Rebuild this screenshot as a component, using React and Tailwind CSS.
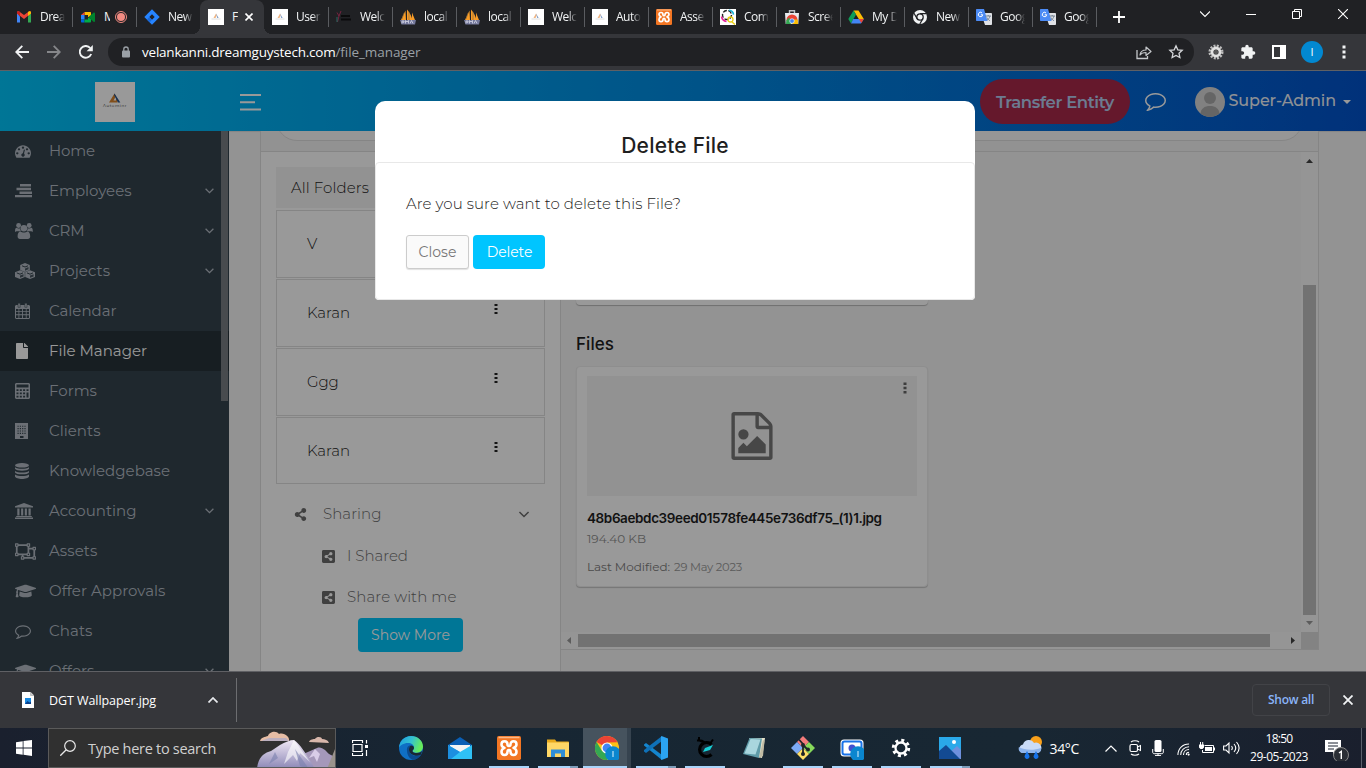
import React, { useLayoutEffect, useRef } from "react";
import {
  FaFile, FaRegObjectUngroup, FaGraduationCap, FaShareAlt, FaShareAltSquare,
} from "react-icons/fa";
import { MdExtension } from "react-icons/md";

/* Text tracked out or in so that it fills the given width. */
function Fit({ w, className = "", children }) {
  const ref = useRef(null);
  useLayoutEffect(() => {
    const el = ref.current;
    el.style.letterSpacing = "0px";
    const natural = el.getBoundingClientRect().width;
    el.style.letterSpacing = `${(w - natural) / Math.max(1, children.length)}px`;
  }, [w, children]);
  return (
    <span ref={ref} className={`inline-block whitespace-pre ${className}`}>{children}</span>
  );
}

const Svg = ({ vb = "0 0 16 16", className = "", children, ...rest }) => (
  <svg viewBox={vb} className={`block shrink-0 ${className}`} fill="none" {...rest}>{children}</svg>
);

/* ---------- favicons ---------- */
const Gmail = () => (
  <Svg className="h-4 w-4">
    <path d="M1 4v9.5h3V7.6z" fill="#4285f4" /><path d="M15 4v9.500h-3V7.600z" fill="#34a853" />
    <path d="M1 4.500 8 10l7-5.500V3.500C15 2 13.400 2 12.500 2.700L8 6 3.500 2.700C2.600 2 1 2 1 3.500z" fill="#ea4335" />
    <path d="M12 7l3-2.400V3.500c0-1.400-1.600-1.500-2.500-.800L12 3z" fill="#fbbc04" />
    <path d="M1 4.600 4 7V3l-.5-.3C2.600 2 1 2.100 1 3.500z" fill="#c5221f" />
  </Svg>
);
const Meet = () => (
  <Svg className="h-4 w-4">
    <path d="M4.500 3H10c.7 0 1 .4 1 1v2.500L8.600 8H8V6H4.500z" fill="#fbbc04" />
    <path d="M4.500 3v3H1z" fill="#ea4335" /><path d="M1 6h3.500v4.500H1z" fill="#2684fc" />
    <path d="M1 10.500h3.500v3H2c-.6 0-1-.4-1-1z" fill="#0066da" />
    <path d="M4.500 10.500H8V8.500l3 1.500v2.500c0 .6-.4 1-1 1H4.500z" fill="#00ac47" />
    <path d="m8.500 8 5-4.300c.500-.400 1.500-.300 1.500.500v8c0 .800-1 .900-1.500.500z" fill="#00832d" />
  </Svg>
);
const Jira = () => (
  <Svg className="h-4 w-4"><path d="M8 .3 15.700 8 8 15.700.3 8z" fill="#2684ff" /><path d="M8 5.300 10.700 8 8 10.700 5.300 8z" fill="#202124" /><path d="M5.300 8 8 10.700 5.700 13.300 3 10.600z" fill="#1868db" /></Svg>
);
const AutoFav = () => (
  <Svg className="h-4 w-4"><path d="M0 0h16v16H0z" fill="#fff" /><path d="M5.500 9 8 4.500l.8 1.500L7.500 9z" fill="#f0b582" /><path d="m8 4.500 2.700 4.500H9.200z" fill="#7d9cc9" /><path d="M3.500 10h9" stroke="#d5d5d5" strokeWidth=".8" /></Svg>
);
const Dark = () => (
  <Svg className="h-4 w-4"><path d="M1 3.500 3 7l2-5M3 7 1.500 13" stroke="#8b2346" strokeWidth="1" opacity=".8" /><path d="M1 8v5" stroke="#276b62" /><path d="M5 6h9v2H5zM5 9.500h10v2H5z" fill="#0b0b0c" /></Svg>
);
const Pma = () => (
  <Svg className="h-4 w-4">
    <path d="M5.500 1.500 1 11h5zM7 .5V11h5.500C11.500 7 9.500 3 7 .5zM12 3.500V11h3z" fill="#f89c27" />
    <path d="M4 4 2 10M9 3v8" stroke="#8c6b3b" strokeWidth=".7" />
    <path d="M0 11h16l-1 4.500H1.500z" fill="#74789b" /><path d="M2 14.500v-2.500h2v1.300H2.500m3 1.200v-3l1.500 1.500L8.500 11.500v3M10 14.500l1.500-3 1.500 3" stroke="#d9dbe8" strokeWidth=".8" />
  </Svg>
);
const Xampp = ({ className = "h-4 w-4" }) => (
  <Svg className={className}>
    <rect width="16" height="16" rx="1.200" fill="#f37623" /><path d="M1 .5h14v1H1z" fill="#f9b98a" />
    <path d="M5 7.900C3.500 7.300 3 6.600 3 5.600 3 4.300 3.900 3.500 5 3.500s2 .8 2 2.200c0 .7.300 1 1 1s1-.3 1-1c0-1.400.9-2.200 2-2.200s2 .8 2 2.100c0 1-.5 1.700-2 2.300 1.500.6 2 1.500 2 2.600 0 1.300-.9 2.100-2 2.100s-2-.8-2-2.100c0-.8-.3-1.100-1-1.100s-1 .3-1 1.100c0 1.300-.9 2.100-2 2.100s-2-.8-2-2.100c0-1.100.5-2 2-2.600z" stroke="#fff" strokeWidth="1.700" strokeLinejoin="round" />
  </Svg>
);
const Com = () => (
  <Svg className="h-4 w-4"><path d="M0 0h16v16H0z" fill="#fff" /><circle cx="7" cy="6" r="4.500" stroke="#222" strokeWidth="1.400" strokeDasharray="4 1.500" /><path d="M9 1.200a5 5 0 0 1 4.500 4.500" stroke="#19b5d8" strokeWidth="1.600" /><path d="M1.500 7.500c.5 3 2.500 4.600 5 5" stroke="#e6259a" strokeWidth="1.600" /><circle cx="10.500" cy="10.500" r="2.500" stroke="#e9cf16" strokeWidth="1.300" /><path d="m12 13 3 2.500" stroke="#e9cf16" strokeWidth="1.500" /></Svg>
);
const Store = () => (
  <Svg className="h-4 w-4"><path d="M1 4h14l-.7 11H1.700z" fill="#e8eaed" /><path d="M5.500 4V1.800h5V4" stroke="#bdc1c6" strokeWidth="1.400" /><path d="M2.500 11a5.500 5.500 0 0 1 11 0v1h-11z" fill="#ea4335" /><path d="M2.300 11.500 5 8.500l3 5-1.500 1.500H2z" fill="#34a853" /><path d="m13.700 10.500-5 0L8 15h6z" fill="#fbbc04" /><circle cx="8" cy="12" r="2.300" fill="#4285f4" stroke="#fff" strokeWidth=".6" /></Svg>
);
const Drive = () => (
  <Svg className="h-4 w-4"><path d="M5.500 1.500h5L15.800 10h-5z" fill="#fbbc04" /><path d="M5.500 1.500 8 5.500 3 14.500.3 10z" fill="#0f9d58" /><path d="M5.200 10h10.600L13 14.500H3z" fill="#4285f4" /><path d="M10.800 10h5l-2.500 4z" fill="#ea4335" /></Svg>
);
const ChromeMono = () => (
  <Svg className="h-4 w-4"><circle cx="8" cy="8" r="7" fill="#f1f3f4" /><circle cx="8" cy="8" r="3.200" fill="#f1f3f4" stroke="#202124" strokeWidth="1.300" /><path d="M8 4.700h6.500M5.100 9.600 2 4.300M10.900 9.600 7.800 15" stroke="#202124" strokeWidth="1.200" /></Svg>
);
const Translate = () => (
  <Svg className="h-4 w-4"><path d="M5 4h10.200c.5 0 .8.300.8.800V15c0 .6-.3 1-.8 1H9z" fill="#e0e2e6" /><path d="M1 0h7l3.500 12H1c-.6 0-1-.4-1-1V1c0-.6.400-1 1-1z" fill="#4c8bf5" /><path d="M6.800 5.800H4.800M6.700 5.800A2.200 2.200 0 1 1 6 3.900" stroke="#fff" strokeWidth="1" /><path d="M9.500 7h5.500M12.200 6v1M14 7c-.5 2.200-2 3.500-3 4.200M11 8.500c.6 1.500 2 2.700 3 3.300" stroke="#6b7a8c" strokeWidth=".9" /></Svg>
);

const TABS = [
  [Gmail, "Drea"], [Meet, "M", "rec"], [Jira, "New"], [AutoFav, "F", "active"], [AutoFav, "User"],
  [Dark, "Welc"], [Pma, "local"], [Pma, "local"], [AutoFav, "Welc"], [AutoFav, "Auto"],
  [Xampp, "Asse"], [Com, "Com"], [Store, "Scree"], [Drive, "My D"], [ChromeMono, "New"],
  [Translate, "Goog"], [Translate, "Goog"],
];

function Tab({ Icon, label, kind }) {
  const active = kind === "active";
  return (
    <div className={`relative flex h-[34px] w-16 shrink-0 items-center pl-2 ${active ? "rounded-t-lg bg-[#35363a]" : ""}`}>
      {active && <>
        <div className="absolute -left-2 bottom-0 h-2 w-2 bg-[radial-gradient(circle_at_0_0,transparent_8px,#35363a_8px)]" />
        <div className="absolute -right-2 bottom-0 h-2 w-2 bg-[radial-gradient(circle_at_100%_0,transparent_8px,#35363a_8px)]" />
      </>}
      <Icon />
      <div className={`ml-2 overflow-hidden whitespace-nowrap text-[12px] tracking-[-0.5px] text-[#f1f3f4] ${kind ? "w-[6px]" : "w-[25px] [mask-image:linear-gradient(to_right,black_65%,transparent)]"}`}>{label}</div>
      {kind === "rec" && <Svg className="ml-[5px] h-3 w-3" vb="0 0 12 12"><circle cx="6" cy="6" r="5.500" stroke="#f28b82" /><circle cx="6" cy="6" r="4" fill="#f28b82" /></Svg>}
      {active && <Svg className="ml-[7px] h-2 w-2" vb="0 0 8 8"><path d="m.5.5 7 7m0-7-7 7" stroke="#fff" strokeWidth="1.600" /></Svg>}
    </div>
  );
}

function TabStrip() {
  return (
    <div className="flex h-[34px] items-center bg-[#202124] pl-2">
      {TABS.map(([Icon, label, kind], i) => (
        <div key={i} className="relative">
          <Tab Icon={Icon} label={label} kind={kind} />
          {i !== 2 && i !== 3 && <div className="absolute -right-px top-[7px] h-5 w-px bg-[#5a5c60]" />}
        </div>
      ))}
      <Svg className="ml-[17px] h-3 w-3" vb="0 0 12 12"><path d="M6 0v12M0 6h12" stroke="#fff" strokeWidth="1.800" /></Svg>
      <div className="ml-auto mb-1.5 flex items-center gap-9 pr-[18px]">
        <Svg className="h-[10px] w-[10px]" vb="0 0 10 10"><path d="m0 2.500 5 5 5-5" stroke="#fff" strokeWidth="1.100" /></Svg>
        <Svg className="h-[10px] w-[10px]" vb="0 0 10 10"><path d="M0 5.500h10" stroke="#fff" /></Svg>
        <Svg className="h-[10px] w-[10px]" vb="0 0 10 10"><path d="M.5 2.500h7v7h-7zM2.500 2.500v-2h7v7h-2" stroke="#fff" /></Svg>
        <Svg className="h-[10px] w-[10px]" vb="0 0 10 10"><path d="m0 0 10 10M10 0 0 10" stroke="#fff" strokeWidth="1.100" /></Svg>
      </div>
    </div>
  );
}

function Toolbar() {
  return (
    <div className="flex h-[37px] items-center border-b border-[#5f6064] bg-[#35363a] pl-[15px] pr-5">
      <Svg className="h-[14px] w-[14px]" vb="0 0 14 14"><path d="M14 7H1.500M7.300.8 1.200 7l6.100 6.200" stroke="#f1f3f4" strokeWidth="1.800" /></Svg>
      <Svg className="ml-[18px] h-[14px] w-[14px]" vb="0 0 14 14"><path d="M0 7h12.500M6.700.8 12.800 7l-6.100 6.200" stroke="#86878a" strokeWidth="1.800" /></Svg>
      <Svg className="ml-[18px] h-[14px] w-[14px]" vb="0 0 14 14"><path d="M12.200 9A5.900 5.900 0 1 1 11.200 3" stroke="#f1f3f4" strokeWidth="1.900" /><path d="M13.800 0v6.200H7.600z" fill="#f1f3f4" /></Svg>
      <div className="ml-[15px] flex h-7 w-[1086px] items-center rounded-full bg-[#202124] pl-[14px] pr-[10px] text-[13.500px]">
        <Svg className="h-3 w-2" vb="0 0 8 12"><rect y="4.500" width="8" height="7" rx="1" fill="#9aa0a6" /><path d="M1.800 5V3.200a2.200 2.200 0 0 1 4.400 0V5" stroke="#9aa0a6" strokeWidth="1.300" /></Svg>
        <div className="ml-3 flex"><Fit w={193.500} className="text-white">velankanni.dreamguystech.com</Fit><Fit w={85} className="text-[#9aa0a6]">/file_manager</Fit></div>
        <Svg className="ml-auto h-4 w-4"><path d="M1 6v8.500h10.500V12" stroke="#c4c7ca" strokeWidth="1.300" /><path d="M4 11c.5-3.500 3-5 6-5V3l5 4.500-5 4v-3c-2.500 0-4.500.5-6 2.500z" stroke="#c4c7ca" strokeWidth="1.200" strokeLinejoin="round" /></Svg>
        <Svg className="ml-4 h-4 w-4"><path d="m8 1.800 1.800 4 4.400.5-3.200 3 .9 4.300L8 11.400l-3.900 2.200.9-4.300-3.200-3 4.400-.5z" stroke="#d4d6d9" strokeWidth="1.300" /></Svg>
      </div>
      <Svg className="ml-[14px] h-4 w-4"><circle cx="8" cy="8" r="6.300" stroke="#bdbdbd" strokeWidth="2.400" strokeDasharray="2 1.300" /><circle cx="8" cy="8" r="4" stroke="#e1e1e1" strokeWidth="2.800" /><circle cx="8" cy="8" r="2.200" fill="#5a5a5a" /></Svg>
      <MdExtension className="ml-4 h-4 w-4 text-[#f1f3f4]" />
      <Svg className="ml-4 h-[14px] w-[14px]" vb="0 0 14 14"><path d="M0 0h14v14H0zM2 2v10h6V2z" fill="#fff" fillRule="evenodd" /></Svg>
      <div className="ml-[15px] flex h-[22px] w-[22px] items-center justify-center rounded-full bg-[#0288d1] text-[11px] text-white">I</div>
      <Svg className="ml-auto h-[14px] w-1" vb="0 0 4 14"><path d="M.5.500h3v3h-3zM.5 5.500h3v3h-3zM.5 10.500h3v3h-3z" fill="#f1f3f4" /></Svg>
    </div>
  );
}

/* ---------- application icons ---------- */
const Gauge = ({ className }) => (
  <Svg vb="0 0 1792 1792" className={className}><path fill="currentColor" d="M384 1152q0-53-37.500-90.500t-90.500-37.500-90.500 37.500-37.500 90.500 37.500 90.500 90.500 37.500 90.500-37.500 37.500-90.500zm192-448q0-53-37.500-90.500t-90.500-37.500-90.500 37.500-37.500 90.500 37.500 90.500 90.500 37.500 90.500-37.500 37.500-90.500zm428 481l101-382q6-26-7.500-48.500t-38.500-29.500-48 6.500-30 39.500l-101 382q-60 5-107 43.500t-63 98.500q-20 77 20 146t117 89 146-20 89-117q16-60-6-117t-72-91zm660-33q0-53-37.500-90.500t-90.500-37.500-90.500 37.500-37.500 90.500 37.500 90.500 90.500 37.500 90.500-37.500 37.500-90.500zm-640-640q0-53-37.500-90.500t-90.500-37.500-90.500 37.500-37.500 90.500 37.500 90.500 90.500 37.500 90.500-37.500 37.500-90.500zm448 192q0-53-37.500-90.500t-90.500-37.500-90.500 37.500-37.500 90.500 37.500 90.500 90.500 37.500 90.500-37.500 37.500-90.500zm320 448q0 261-141 483-19 29-54 29h-1402q-35 0-54-29-141-221-141-483 0-182 71-348t191-286 286-191 348-71 348 71 286 191 191 286 71 348z" /></Svg>
);
const Comment = ({ className }) => (
  <Svg vb="0 0 1792 1792" className={className}><path fill="currentColor" d="M896 384q-204 0-381.500 69.500t-282 187.500-104.500 255q0 112 71.500 213.500t201.500 175.500l87 50-27 96q-24 91-70 172 152-63 275-171l43-38 57 6q69 8 130 8 204 0 381.500-69.500t282-187.500 104.500-255-104.500-255-282-187.500-381.500-69.500zM1792 896q0 174-120 321.500t-326 233-450 85.500q-70 0-145-8-198 175-460 242-49 14-114 22h-5q-15 0-27-10.500t-16-27.500v-1q-3-4-.5-12t2-10 4.500-9.500l6-9 7-8.500 8-9q7-8 31-34.500t34.500-38 31-39.500 32.500-51 27-59 26-76q-157-89-247.500-220t-90.500-281q0-174 120-321.500t326-233 450-85.500 450 85.500 326 233 120 321.500z" /></Svg>
);
const FileImage = ({ className }) => (
  <Svg vb="128 0 1536 1792" className={className}><path fill="currentColor" d="M1596 380q28 28 48 76t20 88v1152q0 40-28 68t-68 28h-1344q-40 0-68-28t-28-68v-1600q0-40 28-68t68-28h896q40 0 88 20t76 48zm-444-244v376h376q-10-29-22-41l-313-313q-12-12-41-22zm384 1528v-1024h-416q-40 0-68-28t-28-68v-416h-768v1536h1280zm-128-448v320h-1024v-192l192-192 128 128 384-384zm-832-192q-80 0-136-56t-56-136 56-136 136-56 136 56 56 136-56 136-136 56z" /></Svg>
);
const Bars = ({ className }) => (
  <Svg vb="0 0 17 14" className={className}><path fill="currentColor" d="M5 0h11v2.500H5zM1.500 3.700H16v2.500H1.500zM4.500 7.400H17v2.500H4.500zM0 11h17v2.300H0z" /></Svg>
);
const Users = ({ className }) => (
  <Svg vb="0 0 18 16" className={className}><g fill="currentColor"><circle cx="3.600" cy="2.500" r="2.400" /><circle cx="14.200" cy="2.500" r="2.400" /><path d="M0 8.500C0 6 .5 4.800 1.500 4.800c.7.500 1.300.7 2.100.7.500 0 1-.1 1.600-.3 0 1.300.3 2.200 1 3H1.400C.5 8.900 0 9 0 8.500zM17.800 8.500c0-2.500-.5-3.700-1.500-3.700-.7.500-1.300.7-2.100.7-.5 0-1-.1-1.600-.3 0 1.300-.3 2.200-1 3h4.800c.9.700 1.400.8 1.400.3z" /><circle cx="8.900" cy="5.200" r="3.300" /><path d="M2.600 13.500c0-3 .9-5 3-5 .9.700 1.900 1.100 3.300 1.100s2.400-.4 3.300-1.100c2.100 0 3 2 3 5 0 1.500-1 2.500-2.300 2.500h-8c-1.300 0-2.300-1-2.300-2.500z" /></g></Svg>
);
const Cubes = ({ className }) => (
  <Svg vb="0 0 20 16" className={className}><path fill="currentColor" d="m10 0 4.800 2v5L10 9 5.200 7V2zM5 7.200l4.800 2v4.800L5 16 0 14V9.200zM15 7.200l5 2V14l-5 2-4.800-2V9.200z" /><path d="M7 2.800 10 4l3-1.200M1.800 9.900 5 11.200l3-1.300M12 9.900l3 1.300 3-1.300" stroke="#35444d" strokeWidth="1" /><path d="m10 5.500 3.500-1.400v2.200L10 7.800zM5 12.600l3.500-1.400v2.200L5 14.800zM15 12.600l3.600-1.400v2.200L15 14.800z" fill="#35444d" opacity=".85" /></Svg>
);
const Database = ({ className }) => (
  <Svg vb="0 0 14 16" className={className}><g fill="currentColor"><ellipse cx="7" cy="2.300" rx="7" ry="2.300" /><path d="M0 4.200c3 2 11 2 14 0v1.500C13 8.300 1 8.300 0 5.700zM0 7.900c3 2 11 2 14 0v1.500c-1 2.600-13 2.600-14 0zM0 11.600c3 2 11 2 14 0v1.900c-1 3.300-13 3.300-14 0z" /></g></Svg>
);
const Bank = ({ className }) => (
  <Svg vb="0 0 18 16" className={className}><path fill="currentColor" d="M9 0l9 3.300v1.200H0V3.300zM2.300 5.500h2.200v7H2.300zM6.100 5.500h2.100v7H6.100zM9.800 5.500h2.100v7H9.800zM13.500 5.500h2.200v7h-2.200zM1.200 12.900h15.600V14H1.200zM0 14.600h18V16H0z" /></Svg>
);
const Calendar = ({ className }) => (
  <Svg vb="0 0 15 16" className={className}><path fill="currentColor" fillRule="evenodd" d="M1 2h13l1 1v12l-1 1H1l-1-1V3zM1 6v2.200h2.500V6zm3.300 0v2.200h2.800V6zM8 6v2.200h2.800V6zm3.600 0v2.200H14V6zM1 9v2.300h2.500V9zm3.300 0v2.300h2.800V9zM8 9v2.300h2.800V9zm3.600 0v2.300H14V9zM1 12.200V15h2.500v-2.800zm3.300 0V15h2.800v-2.800zm3.700 0V15h2.800v-2.800zm3.600 0V15H14v-2.800z" /><path fill="currentColor" stroke="#35444d" strokeWidth=".5" d="M3 .3h2.200v4H3zM9.800.3H12v4H9.800z" /></Svg>
);
const Calc = ({ className }) => (
  <Svg vb="0 0 15 16" className={className}><path fill="currentColor" fillRule="evenodd" d="M1 0h13l1 1v14l-1 1H1l-1-1V1zM1.500 1.500v3h12v-3zM1.500 6.200v1.800h2V6.200zm3.300 0v1.800h2V6.200zm3.300 0v1.800h2V6.200zm3.400 0v1.800h2V6.200zM1.500 9.500v1.800h2V9.500zm3.300 0v1.800h2V9.500zm3.300 0v1.800h2V9.500zM1.500 12.700v1.800h2v-1.800zm3.300 0v1.800h2v-1.800zm3.300 0v1.800h2v-1.800zm3.400-3.200v5h2v-5z" /></Svg>
);
const Building = ({ className }) => (
  <Svg vb="0 0 13 16" className={className}><path fill="currentColor" d="M0 0h13v16H0z" /><path d="M2.500 3.200h8.500M2.500 5.600h8.500M2.500 8h8.500M2.500 10.400h8.500" stroke="#35444d" strokeWidth="1.100" strokeDasharray="1.200 1.100" /><path d="M5 13h3.500v2H5z" fill="#35444d" /></Svg>
);
const AngleDown = ({ className, sw = 1.300 }) => (
  <Svg vb="0 0 9 6" className={className}><path d="m.6.8 3.900 3.900L8.400.8" stroke="currentColor" strokeWidth={sw} /></Svg>
);
const Kebab = ({ className }) => (
  <Svg vb="0 0 4 12" className={className}><path fill="currentColor" d="M.5.500h3v2.600h-3zM.5 4.700h3v2.600h-3zM.5 8.900h3v2.600h-3z" /></Svg>
);
const KebabSmall = ({ className }) => (
  <Svg vb="0 0 4 10" className={className}><path fill="currentColor" d="M.5 0h3v2h-3zM.5 4h3v2h-3zM.5 8h3v2h-3z" /></Svg>
);

const MENU = [
  ["Home", 46, Gauge, "h-4 w-4"], ["Employees", 82.500, Bars, "h-[14px] w-[17px]", 1], ["CRM", 35.500, Users, "h-4 w-[18px]", 1],
  ["Projects", 61, Cubes, "h-4 w-5", 1], ["Calendar", 67.500, Calendar, "h-4 w-[15px]"], ["File Manager", 98, FaFile, "h-4 w-[14px]"],
  ["Forms", 48, Calc, "h-4 w-[15px]"], ["Clients", 51.500, Building, "h-4 w-[13px]"], ["Knowledgebase", 121, Database, "h-4 w-[14px]"],
  ["Accounting", 87.500, Bank, "h-4 w-[18px]", 1], ["Assets", 48.500, FaRegObjectUngroup, "h-[19px] w-[21px]"],
  ["Offer Approvals", 116.500, FaGraduationCap, "h-[18px] w-[21px]"], ["Chats", 43.500, Comment, "h-4 w-4"], ["Offers", 45.500, FaGraduationCap, "h-[18px] w-[21px]", 1],
];

function Sidebar() {
  return (
    <nav className="relative h-[540px] w-[229px] shrink-0 overflow-hidden bg-[#35444d]">
      {MENU.map(([label, w, Icon, size, sub]) => {
        const on = label === "File Manager";
        return (
          <div key={label} className={`flex h-10 items-center pl-[15px] pr-[15px] text-[15px] ${on ? "bg-black/25 text-white" : "text-[#b2bac4]"}`}>
            <div className="flex w-[34px] items-center"><Icon className={size} /></div>
            <Fit w={w}>{label}</Fit>
            {sub && <AngleDown className="ml-auto h-[6px] w-[9px]" />}
          </div>
        );
      })}
      <div className="absolute left-[221px] top-0 h-[270px] w-[7px] bg-[#797d83]" />
    </nav>
  );
}

function Header() {
  return (
    <header className="flex h-[60px] shrink-0 items-center bg-[linear-gradient(to_right,#00c5fb_0%,#0253cc_100%)] pl-[95px] pr-[15px] text-white">
      <div className="mt-[2px] flex h-10 w-10 flex-col items-center justify-center bg-white">
        <Svg className="mt-[-4px] h-[10px] w-3" vb="0 0 12 10"><path d="M0 9.500 5.500.5 7 3 4.500 7.500h2.500V5.500h1.500v4z" fill="#d8832c" /><path d="m5.500.5 5.800 9H9L5 2z" fill="#24548f" /></Svg>
        <span className="text-[4px] leading-[5px] tracking-[0.6px] text-[#333]">Autominr</span>
      </div>
      <Svg className="ml-[105px] mt-[2px] h-[17px] w-[21px]" vb="0 0 21 17"><path d="M0 1h21M0 8.200h15M0 15.500h21" stroke="#fff" strokeWidth="2" /></Svg>
      <div className="ml-auto flex h-[45px] w-[150px] items-center justify-center rounded-full bg-[#a9284a] pl-[1px] pt-[2px] text-[16.500px] font-semibold text-[#b5cdf0]"><Fit w={118}>Transfer Entity</Fit></div>
      <Comment className="mb-[1px] ml-[15px] h-[21px] w-[21px]" />
      <Svg className="ml-[29px] mt-[1px] h-[30px] w-[30px]" vb="0 0 30 30"><circle cx="15" cy="15" r="15" fill="#d7d7d7" /><circle cx="15" cy="11" r="6" fill="#a9a9a9" /><path d="M5.500 26.500C6 21.500 9.500 19 15 19s9 2.500 9.500 7.500A15 15 0 0 1 5.500 26.500z" fill="#a9a9a9" /></Svg>
      <div className="ml-1 text-[16px] font-medium text-[#eef2f8]"><Fit w={107.500}>Super-Admin</Fit></div>
      <Svg className="ml-[7px] mt-[2px] h-1 w-2" vb="0 0 8 4"><path d="M0 0h8L4 4z" fill="#fff" /></Svg>
    </header>
  );
}

function Folder({ name, w, last }) {
  return (
    <div className={`flex items-center border border-[#dedede] pl-[30px] pr-[46px] text-[15px] font-light text-[#222] ${last ? "h-[67px]" : "h-[68px]"}`}>
      <Fit w={w} className="mt-px">{name}</Fit>
      {name !== "V" && <KebabSmall className="mb-2 ml-auto h-[10px] w-1" />}
    </div>
  );
}

function FolderPanel() {
  return (
    <aside className="w-[301px] shrink-0 border-x border-[#dedede] bg-white px-[15px] pt-[15px] text-[15px] font-light text-[#6c6c6c]">
      <div className="flex h-[41px] items-center bg-[#f3f3f3] pl-[15px] pt-[2px] text-[#222]"><Fit w={78}>All Folders</Fit></div>
      <div className="mt-[2px] flex flex-col gap-px">
        <Folder name="V" w={10} /><Folder name="Karan" w={43} /><Folder name="Ggg" w={31.500} /><Folder name="Karan" w={43} last />
      </div>
      <div className="mt-[9px] flex h-[42px] items-center pl-[18px] pr-[15px]">
        <FaShareAlt className="h-[13px] w-[13px]" /><Fit w={58.500} className="ml-4">Sharing</Fit>
        <AngleDown className="ml-auto h-[7px] w-[12px]" />
      </div>
      <div className="mt-px flex h-[41px] items-center pl-[46px]"><FaShareAltSquare className="h-[15px] w-[13px]" /><Fit w={61} className="ml-3">I Shared</Fit></div>
      <div className="flex h-[41px] items-center pl-[46px]"><FaShareAltSquare className="h-[15px] w-[13px]" /><Fit w={109.500} className="ml-3">Share with me</Fit></div>
      <div className="ml-[82px] flex h-[34px] w-[105px] items-center justify-center rounded bg-[#00c5fb] text-[14px] font-normal text-white"><Fit w={79}>Show More</Fit></div>
    </aside>
  );
}

function FileCard() {
  return (
    <div className="h-[221px] w-[352px] rounded border border-[#ededed] bg-white px-[10px] pt-[9px] shadow-[0_1px_1px_0_rgba(0,0,0,0.2)]">
      <div className="relative flex h-[120px] items-center justify-center bg-[#f3f3f3]">
        <FileImage className="h-12 w-[42px] text-[#777]" />
        <Kebab className="absolute right-[10px] top-[6px] h-3 w-1 text-[#666]" />
      </div>
      <div className="mt-[12px] h-5 font-['Inter',sans-serif] text-[13.500px] font-semibold leading-5 text-[#1f1f1f]"><Fit w={294.500}>48b6aebdc39eed01578fe445e736df75_(1)1.jpg</Fit></div>
      <div className="mt-px h-5 text-[12px] leading-5 text-[#8e8e8e]"><Fit w={59}>194.40 KB</Fit></div>
      <div className="mt-2 flex h-5 gap-1 text-[12px] leading-5 text-[#7c7c7c]"><Fit w={83}>Last Modified:</Fit><Fit w={68} className="text-[11.500px] text-[#999]">29 May 2023</Fit></div>
    </div>
  );
}

function FileArea() {
  return (
    <section className="flex h-[498px] flex-1 flex-col border-b border-r border-[#dedede]">
      <div className="flex h-[480px]">
        <div className="flex flex-1 flex-col pl-[15px]">
          <div className="h-[153px] w-[352px] rounded-b bg-white shadow-[0_1px_1px_0_rgba(0,0,0,0.25)]" />
          <div className="mt-[27px] h-[34px] font-['Inter',sans-serif] text-[17px] font-medium leading-6 text-[#1f1f1f]"><Fit w={38}>Files</Fit></div>
          <FileCard />
        </div>
        <div className="flex w-[17px] flex-col items-center bg-[#f8f8f8]">
          <Svg className="mt-[7px] h-1 w-[7px]" vb="0 0 7 4"><path d="M0 4h7L3.500 0z" fill="#444" /></Svg>
          <div className="mt-[122px] h-[330px] w-[13px] bg-[#bebebe]" />
          <Svg className="mt-[6px] h-1 w-[7px]" vb="0 0 7 4"><path d="M0 0h7L3.500 4z" fill="#999" /></Svg>
        </div>
      </div>
      <div className="flex h-[17px] items-center bg-[#f8f8f8] pl-[6px]">
        <Svg className="h-[7px] w-1" vb="0 0 4 7"><path d="M4 0v7L0 3.500z" fill="#999" /></Svg>
        <div className="ml-[7px] h-[13px] w-[692px] bg-[#bebebe]" />
        <Svg className="ml-[21px] h-[7px] w-1" vb="0 0 4 7"><path d="M0 0v7l4-3.500z" fill="#444" /></Svg>
        <div className="ml-auto h-[17px] w-[17px] bg-[#dadada]" />
      </div>
    </section>
  );
}

function Modal() {
  return (
    <div className="absolute left-[375px] top-[30px] h-[199px] w-[600px] overflow-hidden rounded-b rounded-t-[10px] bg-white">
      <div className="flex h-[61px] justify-center pt-[29px] font-['Inter',sans-serif] text-[21px] font-medium leading-8 text-[#1f1f1f]"><Fit w={107.500}>Delete File</Fit></div>
      <div className="h-[138px] rounded border border-[#e8e8e8] pl-[30px] pt-[29px]">
        <div className="text-[15px] font-light leading-6 text-[#222]"><Fit w={275}>Are you sure want to delete this File?</Fit></div>
        <div className="mt-[19px] flex gap-1 text-[14px]">
          <div className="flex h-[34px] w-[63px] items-center justify-center rounded-[3px] border border-[#ccc] bg-[#fafafa] text-[#777] shadow-[0_1px_1px_rgba(0,0,0,0.12)]"><Fit w={38}>Close</Fit></div>
          <div className="flex h-[34px] w-[72px] items-center justify-center rounded bg-[#00c5ff] pl-px text-white"><Fit w={45.500}>Delete</Fit></div>
        </div>
      </div>
    </div>
  );
}

function DownloadBar() {
  return (
    <div className="flex h-[57px] items-center border-t border-[#5f6064] bg-[#35363a] pl-[22px] pr-[13px] text-[12px] text-white">
      <Svg className="mb-px h-4 w-3" vb="0 0 12 16"><path d="M0 0h8.500L12 3.500V16H0z" fill="#fff" /><path d="M8.500 0v3.500H12" fill="#c8c8c8" stroke="#999" strokeWidth=".5" /><path d="M3 6h6v6H3z" fill="#1b8ae0" /><path d="m3 12 2.500-3 2 1.500L9 9.500V12z" fill="#0b3f8a" /></Svg>
      <Fit w={107} className="ml-[15px] mt-[2px] text-[12.500px]">DGT Wallpaper.jpg</Fit>
      <Svg className="ml-[52px] h-[6px] w-[10px]" vb="0 0 10 6"><path d="m.5 5.500 4.500-4.500 4.500 4.500" stroke="#e8eaed" strokeWidth="1.700" /></Svg>
      <div className="ml-[18px] h-[44px] w-px bg-[#6c6d70]" />
      <div className="ml-auto flex h-8 w-[78px] items-center justify-center rounded border border-[#424347] font-semibold text-[#8ab4f8]"><Fit w={46}>Show all</Fit></div>
      <Svg className="ml-[13px] h-[10px] w-[10px]" vb="0 0 10 10"><path d="m.5.500 9 9m0-9-9 9" stroke="#f1f3f4" strokeWidth="1.800" /></Svg>
    </div>
  );
}

/* ---------- taskbar ---------- */
const S = "h-6 w-6";
const Badge = () => (<><circle cx="18" cy="18" r="7.800" fill="#0a86cf" /><path d="M18 15v6" stroke="#b9e2f7" strokeWidth="1.200" /></>);
const EdgeI = () => (
  <Svg vb="0 0 24 24" className={S}>
    <defs><linearGradient id="eg" x1="0" y1="0" x2="1" y2=".3"><stop stopColor="#1b9de2" /><stop offset=".55" stopColor="#35c1d0" /><stop offset="1" stopColor="#66eb5b" /></linearGradient></defs>
    <circle cx="12" cy="12" r="12" fill="#0f6fc5" />
    <path d="M0 11.500C.5 5 5.500 0 12 0c7 0 12 5 12 10.500 0 4-3 6.300-6.500 6.300-3 0-4.300-1-4-2 .3-.7 1.500-1.500 1.500-3.300C15 9 12.500 7 9 7 4.500 7 1 9.500 0 11.500z" fill="url(#eg)" />
    <path d="M8 14.500C7.500 11 10 9 12 9.500c-1.500 1-2 2.300-2 4 0 4 4 7 8.500 6.500 1.500-.2 3-.8 4-1.500-1.500 2.500-4.500 5-8.500 5.300-3.500-.8-6-5-6-9.300z" fill="#0b4a8e" />
    <path d="M10 13.500c0-1.500.5-3 2-4 2 .2 3 1.200 3 2.500 0 1.500-1.500 2-1.500 3 0 1.500 2 2 4 2 2.500 0 4.500-.8 5.500-2-.2 1.300-.5 2.500-1.500 4-4 2-11.500 0-11.500-5.500z" fill="#1a2733" />
  </Svg>
);
const MailI = () => (<Svg vb="0 0 24 24" className={S}><path d="M0 9 12 1l12 8v13H0z" fill="#0a5fb5" /><path d="M2 9h20v8H2z" fill="#f3f3f3" /><path d="M0 9l12 7 12-7v14H0z" fill="#2fc1f5" /><path d="m0 9 12 7-9 7H0z" fill="#1c8fe0" /></Svg>);
const FolderI = () => (<Svg vb="0 0 24 24" className={S}><path d="M1 3.500h8l1.500 2H22c.6 0 1 .4 1 1V21H1z" fill="#e8a91c" /><path d="M1 6.500h22V21H1z" fill="#ffd766" /><path d="M5 21v-7.500h14V21h-4v-3.500H9V21z" fill="#2f8ed8" /></Svg>);
const ChromeI = () => (<Svg vb="0 0 24 24" className={S}><circle cx="12" cy="12" r="12" fill="#fbc116" /><path d="M12 12 1.600 6A12 12 0 0 1 22.400 6.200L12 6.500z" fill="#ea4335" /><path d="M1.600 6A12 12 0 0 0 12 24l5-9-5 1-5-1z" fill="#34a853" /><circle cx="12" cy="12" r="5.600" fill="#fff" /><circle cx="12" cy="12" r="4.400" fill="#4285f4" /><Badge /></Svg>);
const CodeI = () => (<Svg vb="0 0 24 24" className={S}><path d="M0 8.500 2 7l16 12v5L0 9.500z" fill="#1486cf" /><path d="M0 15.500 2 17 18 5V0L0 14z" fill="#0f71b8" /><path d="m17.500 0 6.500 2.500v19L17.500 24l-.5-1V1z" fill="#2ba4f2" /></Svg>);
const CI = () => (<Svg vb="0 0 24 24" className={S}><path d="M18.500 8.500a7 7 0 1 0 0 10" stroke="#000" strokeWidth="3.200" /><path d="M20 3.500 17.500 7 12 6.500C10 5 7.500 4 4 4.500M6 1v3l3 2" stroke="#000" strokeWidth="2" /><path d="m10 16 2-4 8-3-3 5z" fill="#17cfd6" /></Svg>);
const NoteI = () => (<Svg vb="0 0 24 24" className={S}><path d="M7 2h16l-3 20-4-1z" fill="#e6e2cb" /><path d="M7.500 2 20 2.500 17 22 1 18z" fill="#5f9ba8" /><path d="m8.500 3 10 .5-5 15-11-1z" fill="#a9d6de" /><path d="m21 4-4 18 4-2 1.500-15z" fill="#c0bba4" /></Svg>);
const GitI = () => (<Svg vb="0 0 24 24" className={S}><path d="m12 0 6 6-6 6-6-6z" fill="#f27b7b" /><path d="m6 6 6 6-6 6-6-6z" fill="#7daaf5" /><path d="m18 6 6 6-6 6-6-6z" fill="#86d95b" /><path d="m12 12 6 6-6 6-6-6z" fill="#ffde66" /><path d="M8 3.500 12 8v10M12 9l5 5" stroke="#1f2429" strokeWidth="1.800" /><circle cx="12" cy="18" r="2" fill="#1f2429" /><circle cx="17" cy="13.500" r="2" fill="#1f2429" /><circle cx="12" cy="9" r="2" fill="#1f2429" /></Svg>);
const SnipI = () => (<Svg vb="0 0 24 24" className={S}><rect x=".5" y="3.500" width="23" height="17" rx="3.500" fill="#fff" /><rect x="2.500" y="5.500" width="19" height="13" rx="2" stroke="#1a73e8" strokeWidth="2" /><circle cx="12" cy="12" r="3.500" fill="#4450cf" /><Badge /></Svg>);
const GearI = () => (<Svg vb="0 0 24 24" className={S}><circle cx="12" cy="12" r="7.700" stroke="#fff" strokeWidth="3" strokeDasharray="3 3.050" /><circle cx="12" cy="12" r="5.500" stroke="#fff" strokeWidth="2.300" /></Svg>);
const PhotoI = () => (<Svg vb="0 0 24 24" className={S}><path d="M1 1h22v22H1z" fill="#2aa9e9" /><path d="m12 16 7-6 4 4v9h-8z" fill="#6f90dd" /><path d="m1 15 7-6 14 14H1z" fill="#134a92" /><circle cx="16" cy="6" r="2" fill="#fff" /></Svg>);
const XamppI = () => <Xampp className={S} />;
const APPS = [
  [EdgeI, 0], [MailI, 0], [XamppI, 1], [FolderI, 2], [ChromeI, 3], [CodeI, 2], [CI, 1], [NoteI, 0], [GitI, 1], [SnipI, 1], [GearI, 1], [PhotoI, 2],
];

function AppSlot({ Icon, state }) {
  return (
    <div className="flex h-10 w-[49px] shrink-0 justify-center">
      <div className={`relative flex h-10 shrink-0 items-center justify-center ${state === 3 ? "w-[48px] border-r-4 border-[#36434f] bg-[#46535e] pl-1" : "w-10"}`}>
        <Icon />
        {state > 0 && <div className={`absolute bottom-0 left-0 h-[2px] bg-[#a9d4fa] ${state === 2 ? "w-8" : "w-full"}`} />}
        {state === 2 && <div className="absolute bottom-0 right-0 h-[2px] w-[8px] bg-[#7d9cb9]" />}
      </div>
    </div>
  );
}

function Taskbar() {
  return (
    <div className="flex h-10 items-center bg-[linear-gradient(to_right,#1a202e,#172633_35%,#182733_75%,#1a1f2d)] text-white">
      <Svg className="ml-4 h-4 w-4"><path d="M0 2.200 6.700 1.200v6.400H0zM7.500 1.100 16 0v7.600H7.500zM0 8.400h6.700v6.400L0 13.800zM7.500 8.400H16V16l-8.500-1.200z" fill="#fff" /></Svg>
      <div className="ml-4 flex h-10 w-72 items-center overflow-hidden border border-[#5a5a5a] bg-[#303030] pl-[11px]">
        <Svg className="h-4 w-4"><circle cx="10" cy="6" r="5.300" stroke="#e8e8e8" strokeWidth="1.200" /><path d="M6.200 9.800.3 15.700" stroke="#e8e8e8" strokeWidth="1.300" /></Svg>
        <Fit w={128} className="ml-3 mt-px text-[14.500px] text-[#d0d0d0]">Type here to search</Fit>
        <Svg vb="0 0 78 38" className="ml-auto h-[38px] w-[78px]" preserveAspectRatio="none">
          <defs><linearGradient id="mt" x1="0" y1="0" x2="0" y2="1"><stop stopColor="#f0e8f5" /><stop offset="1" stopColor="#8b86b5" /></linearGradient></defs>
          <path d="M44 26 60 19c5-2 9 3 12 6l6 3v12H44z" fill="#a598ba" /><path d="m58 20-6 9 5-2 3 6 3-8z" fill="#d9cde8" /><path d="m78 20-8 20h8z" fill="#9a938c" />
          <path d="M0 40c1-12 7-16 14-18l9-6c5-3 10-5 14-5 6 4 12 14 17 22l4 7z" fill="url(#mt)" />
          <path d="m37 11-6 12-4 12 9-9 4 6 3-8 10 9z" fill="#fff" opacity=".6" /><path d="m18 23-6 12 9-6zM38 20l5 17 9 3z" fill="#7980ae" opacity=".6" />
          <path d="M3 12c1-4 5-4 8-5 1-4 8-6 11-2 5-2 11 3 10 7z" fill="#e6bda5" /><path d="M4 12h28l-3-3H12z" fill="#a8a9cb" opacity=".7" />
          <path d="M52 13c1-3 5-3 6-3 2-3 7-2 7 0 3 0 6 1 7 4z" fill="#d9b7aa" />
        </Svg>
      </div>
      <Svg className="ml-4 h-4 w-4"><path d="M0 .5h11M0 15.500h11M1 4.500h9v7H1zM.5.500v2.500M10.500.500v2.500M.5 13v2.500M10.500 13v2.500M14.500 0v3.500M14.500 10v6" stroke="#fff" strokeWidth="1.200" /><path d="M13 5h3v3h-3z" fill="#fff" /></Svg>
      <div className="ml-[18.500px] flex">
        {APPS.map(([Icon, state], i) => <AppSlot key={i} Icon={Icon} state={state} />)}
      </div>
      <Svg vb="0 0 24 24" className="ml-[43px] h-6 w-6"><circle cx="18" cy="6" r="6" fill="#f9a01b" /><path d="M4 17a4.500 4.500 0 0 1 1-8.500 6 6 0 0 1 11-1.500 5 5 0 0 1 4 10z" fill="#cadcf8" /><path d="M4 17a4.500 4.500 0 0 1-3-6c5 3 14 4 22 1 .5 3-1 4.500-3 5z" fill="#8fb5ec" /><path d="m9 15-2 4a2.500 2.500 0 1 0 4.500 1zM18 15l-2 4a2.500 2.500 0 1 0 4.500 1z" fill="#1672e8" /></Svg>
      <Fit w={29.500} className="ml-2 text-[14px]">34°C</Fit>
      <Svg vb="0 0 12 7" className="ml-[26px] h-[7px] w-3"><path d="m.5 6.500 5.500-5.500 5.500 5.500" stroke="#fff" strokeWidth="1.200" /></Svg>
      <Svg className="ml-[12px] h-4 w-3" vb="0 0 12 16"><rect x="1" y="4.500" width="7.500" height="7" rx="1.500" stroke="#fff" strokeWidth="1.200" /><path d="m8.500 7 3-1.500v5L8.500 9M2 2c2-1.700 6-1.700 8 0M2 14c2 1.700 6 1.700 8 0" stroke="#fff" strokeWidth="1.100" /></Svg>
      <Svg className="ml-[11px] h-4 w-3" vb="0 0 12 16"><rect x="2.500" width="7" height="12" rx="1.500" fill="#fff" /><path d="M.7 9v3c0 1.300.6 1.700 1.500 1.700h7.600c1 0 1.500-.5 1.500-1.700V9M6 13.500V16M3 15.600h6" stroke="#fff" /></Svg>
      <Svg className="ml-[13px] mt-[2px] h-[13px] w-[13px]" vb="0 0 14 14"><path d="M1 13C1 6 6 1 13 1M4 13C4 8 8 4 13 4M7 13c0-3.500 2.500-6 6-6M10 13c0-2 1-3 3-3" stroke="#fff" strokeWidth="1.100" /><circle cx="12.500" cy="12.500" r="1.200" fill="#fff" /></Svg>
      <Svg className="ml-[9px] h-3 w-4" vb="0 0 16 12"><path d="M5.500 3.500h9v7h-11V8" stroke="#fff" /><path d="M6 5h7v4H6zM15 5.500h1v3h-1zM0 2.500h5v3l-1.500 1.500h-2L0 5.500zM1 0h1v2.500H1zM3.200 0h1v2.500h-1z" fill="#fff" /></Svg>
      <Svg className="ml-[8px] h-[14px] w-[17px]" vb="0 0 17 14"><path d="M.6 5v4H3l3 3V2L3 5zM8.500 5c1 1.200 1 2.800 0 4M11 3c2.200 2.500 2.200 5.500 0 8M13.500 1c3.300 3.800 3.300 8.200 0 12" stroke="#fff" strokeWidth="1.100" /></Svg>
      <div className="ml-[9px] flex w-[60px] flex-col items-center text-[12px] leading-[18px]"><Fit w={27}>18:50</Fit><Fit w={58}>29-05-2023</Fit></div>
      <Svg vb="0 0 25 24" className="ml-[16px] mt-[2px] h-6 w-[25px]"><path d="M0 3h16v12h-4l-4 4v-4H0z" fill="#fff" /><path d="M3 6h10M3 9h10M3 12h6" stroke="#1a2331" /><circle cx="16" cy="18" r="7.500" fill="#2b2f36" stroke="#888" /><path d="m14 16 2.300-1.600V22" stroke="#fff" strokeWidth="1.400" /></Svg>
      <div className="ml-auto mr-1 h-10 w-px bg-[#5a606b]" />
    </div>
  );
}

export default function App() {
  return (
    <div className="flex h-[768px] w-[1366px] flex-col overflow-hidden bg-[#202124] font-['Open_Sans','Noto_Sans',sans-serif]">
      <TabStrip />
      <Toolbar />
      <div className="relative flex h-[600px] shrink-0 flex-col overflow-hidden font-['Montserrat','Inter',sans-serif]">
        <Header />
        <div className="flex h-[540px]">
          <Sidebar />
          <main className="flex h-[540px] flex-1 flex-col bg-[#f6f6f6] pl-[31px] pr-[47px] shadow-[inset_0_1px_1px_#ddd]">
            <div className="h-[21px] shrink-0 overflow-hidden border-b border-l border-r border-[#dedede] bg-[#f4f4f4] px-[15px]">
              <div className="-mt-8 h-[42px] rounded-full border border-[#dedede] bg-[#fafafa]" />
            </div>
            <div className="flex min-h-0 flex-1">
              <FolderPanel />
              <FileArea />
            </div>
          </main>
        </div>
        <div className="absolute inset-0 bg-black/40" />
        <Modal />
      </div>
      <DownloadBar />
      <Taskbar />
    </div>
  );
}
